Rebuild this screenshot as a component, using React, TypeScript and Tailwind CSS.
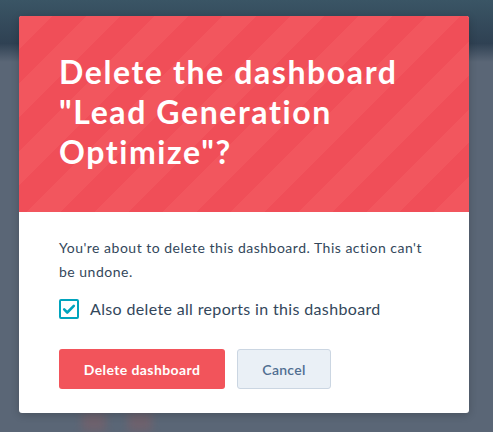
import { useState } from "react";

export default function App() {
  const [alsoReports, setAlsoReports] = useState(true);

  return (
    <div className="relative w-[493px] h-[432px] overflow-hidden bg-[#5a6676] font-['Lato','Liberation_Sans',sans-serif]">
      {/* page behind the overlay */}
      <div className="absolute inset-x-0 top-0 h-[62px] bg-[linear-gradient(to_bottom,#3a5565_0%,#2f4153_70%,#5a6676_100%)]" />
      <div className="absolute left-[82px] top-[412px] w-[24px] h-[20px] bg-[#76606a] blur-[4px] opacity-70" />
      <div className="absolute left-[128px] top-[412px] w-[24px] h-[20px] bg-[#76606a] blur-[4px] opacity-70" />

      <div className="relative pt-4 pl-[19px]">
        <div className="w-[450px] rounded-[3px] overflow-hidden bg-white shadow-[0_2px_8px_rgba(0,0,0,0.2)]">
          {/* Header */}
          <div className="h-[196px] px-[40px] pt-[36px] bg-[#f0505a] bg-[repeating-linear-gradient(135deg,#f2565e_0px,#f2565e_24px,#f04e58_24px,#f04e58_48px)]">
            <h1 className="text-white text-[32px] leading-[40px] font-bold tracking-[1.6px]">
              Delete the dashboard "Lead Generation Optimize"?
            </h1>
          </div>

          {/* Body */}
          <div className="px-[40px] pt-[24px] pb-[24px]">
            <p className="text-[#33475b] text-[14px] leading-[24px] tracking-[0.5px]">
              You're about to delete this dashboard. This action can't be undone.
            </p>

            <label className="mt-[13px] flex items-center gap-[11px] cursor-pointer">
              <button
                type="button"
                onClick={() => setAlsoReports((v) => !v)}
                aria-pressed={alsoReports}
                className="w-[20px] h-[20px] rounded-[2px] border-2 border-[#00a4bd] bg-white flex items-center justify-center"
              >
                {alsoReports && (
                  <svg viewBox="0 0 16 16" className="w-[14px] h-[14px]" aria-hidden="true">
                    <path d="M2.5 8.5l3.5 3.5 7.5-7.5" fill="none" stroke="#00a4bd" strokeWidth={3} strokeLinecap="round" strokeLinejoin="round" />
                  </svg>
                )}
              </button>
              <span className="text-[#33475b] text-[16px] leading-[24px] tracking-[0.35px]">
                Also delete all reports in this dashboard
              </span>
            </label>

            <div className="mt-[28px] flex gap-[12px]">
              <button className="h-[40px] w-[166px] rounded-[3px] bg-[#f2545b] text-white text-[14px] font-bold tracking-[0.4px]">
                Delete dashboard
              </button>
              <button className="h-[40px] w-[94px] rounded-[3px] bg-[#eaf0f6] border border-[#cbd6e2] text-[#506e91] text-[14px] font-semibold tracking-[0.3px]">
                Cancel
              </button>
            </div>
          </div>
        </div>
      </div>
    </div>
  );
}
